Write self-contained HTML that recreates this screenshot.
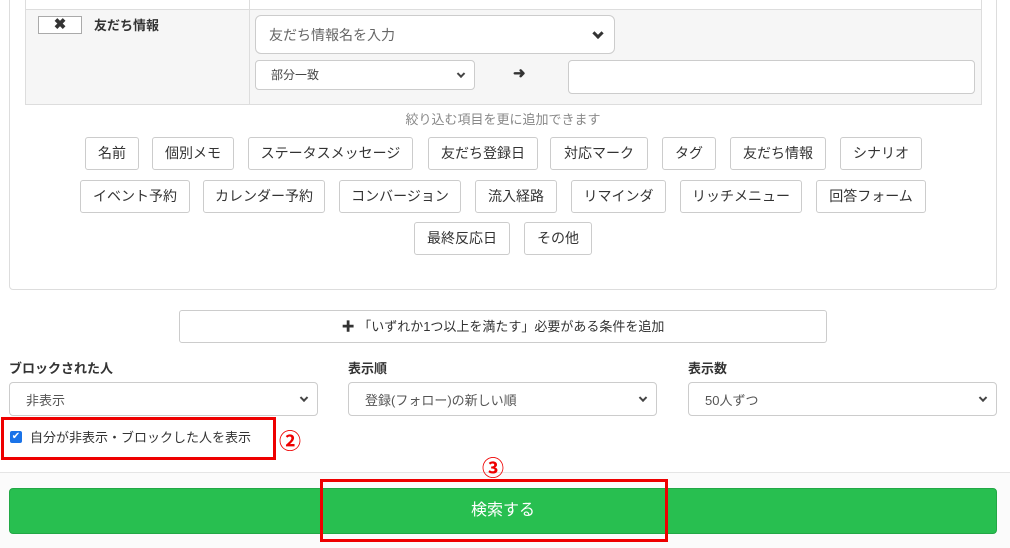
<!DOCTYPE html>
<html><head><meta charset="utf-8"><style>
*{box-sizing:border-box;margin:0;padding:0}
body{width:1010px;height:548px;position:relative;background:#fff;font-family:"Liberation Sans","Noto Sans CJK JP",sans-serif;color:#333;font-size:13px;overflow:hidden}
.a{position:absolute}
.panel{left:9px;top:-5px;width:988px;height:295px;border:1px solid #ddd;border-radius:4px}
.tag{position:absolute;height:33px;border:1px solid #ccc;border-radius:3px;background:#fff;font-size:14px;line-height:31px;text-align:center;color:#333}
.sel{position:absolute;border:1px solid #ccc;border-radius:4px;background:#fff;font-size:13px;color:#555}
.chev{position:absolute;right:10px;top:50%;width:6px;height:6px;border-right:2px solid #444;border-bottom:2px solid #444;transform:translateY(-70%) rotate(45deg)}
.lbl{position:absolute;top:358px;font-size:13px;font-weight:bold;color:#333}
</style></head><body>
<div class="a panel"></div>
<div class="a" style="left:25px;top:-2px;width:957px;height:107px;border:1px solid #ddd;border-top:none"></div>
<div class="a" style="left:26px;top:9px;width:955px;height:95px;background:#f6f6f6;border-top:1px solid #ddd"></div>
<div class="a" style="left:249px;top:-2px;width:1px;height:106px;background:#ddd"></div>
<div class="a" style="left:38px;top:16px;width:44px;height:18px;border:1px solid #aaa;background:#fff;text-align:center;font-size:15px;line-height:16px;font-weight:bold">✖</div>
<div class="a" style="left:94px;top:15px;font-size:13px;font-weight:bold">友だち情報</div>
<div class="sel" style="left:255px;top:15px;width:360px;height:39px;border-radius:6px;padding:9px 13px;font-size:14px;color:#666">友だち情報名を入力<div class="chev" style="right:12px;width:8px;height:8px;border-width:3px;border-color:#333"></div></div>
<div class="sel" style="left:255px;top:60px;width:220px;height:30px;padding:5px 15px;font-size:12px;color:#444">部分一致<div class="chev"></div></div>
<div class="a" style="left:513px;top:64px;font-size:15px;font-weight:bold;color:#333">➜</div>
<div class="sel" style="left:568px;top:60px;width:407px;height:34px"></div>
<div class="a" style="left:0;width:1006px;top:109px;text-align:center;font-size:13px;color:#888">絞り込む項目を更に追加できます</div>
<div class="tag" style="left:85px;top:137px;width:54px">名前</div>
<div class="tag" style="left:152px;top:137px;width:82px">個別メモ</div>
<div class="tag" style="left:248px;top:137px;width:165px">ステータスメッセージ</div>
<div class="tag" style="left:428px;top:137px;width:110px">友だち登録日</div>
<div class="tag" style="left:550px;top:137px;width:98px">対応マーク</div>
<div class="tag" style="left:662px;top:137px;width:54px">タグ</div>
<div class="tag" style="left:730px;top:137px;width:96px">友だち情報</div>
<div class="tag" style="left:840px;top:137px;width:82px">シナリオ</div>
<div class="tag" style="left:80px;top:180px;width:110px">イベント予約</div>
<div class="tag" style="left:203px;top:180px;width:122px">カレンダー予約</div>
<div class="tag" style="left:339px;top:180px;width:122px">コンバージョン</div>
<div class="tag" style="left:475px;top:180px;width:82px">流入経路</div>
<div class="tag" style="left:571px;top:180px;width:95px">リマインダ</div>
<div class="tag" style="left:680px;top:180px;width:122px">リッチメニュー</div>
<div class="tag" style="left:816px;top:180px;width:110px">回答フォーム</div>
<div class="tag" style="left:414px;top:222px;width:96px">最終反応日</div>
<div class="tag" style="left:524px;top:222px;width:68px">その他</div>
<div class="tag" style="left:179px;top:310px;width:648px;font-size:13px">✚ 「いずれか1つ以上を満たす」必要がある条件を追加</div>
<div class="lbl" style="left:9px">ブロックされた人</div>
<div class="lbl" style="left:348px">表示順</div>
<div class="lbl" style="left:688px">表示数</div>
<div class="sel" style="left:9px;top:382px;width:309px;height:34px;padding:7px 16px;font-size:13px">非表示<div class="chev"></div></div>
<div class="sel" style="left:348px;top:382px;width:309px;height:34px;padding:7px 16px;font-size:13px">登録(フォロー)の新しい順<div class="chev"></div></div>
<div class="sel" style="left:688px;top:382px;width:309px;height:34px;padding:7px 16px;font-size:13px">50人ずつ<div class="chev"></div></div>
<div class="a" style="left:10px;top:431px;width:12px;height:12px;background:#1a73e8;border-radius:2px;color:#fff;font-size:10px;line-height:12px;text-align:center">✔</div>
<div class="a" style="left:30px;top:427px;font-size:13px">自分が非表示・ブロックした人を表示</div>
<div class="a" style="left:1px;top:417px;width:275px;height:43px;border:3px solid #e00"></div>
<div class="a" style="left:279px;top:424px;font-size:22px;color:#e00;font-weight:bold">②</div>
<div class="a" style="left:0;top:472px;width:1010px;height:76px;background:#fbfbfb;border-top:1px solid #e5e5e5"></div>
<div class="a" style="left:482px;top:451px;font-size:22px;color:#e00;font-weight:bold">③</div>
<div class="a" style="left:9px;top:488px;width:988px;height:46px;background:#28bf50;border:1px solid #22a846;border-radius:4px;color:#fff;font-size:16px;text-align:center;line-height:44px">検索する</div>
<div class="a" style="left:320px;top:479px;width:348px;height:63px;border:3px solid #e00"></div>
</body></html>
